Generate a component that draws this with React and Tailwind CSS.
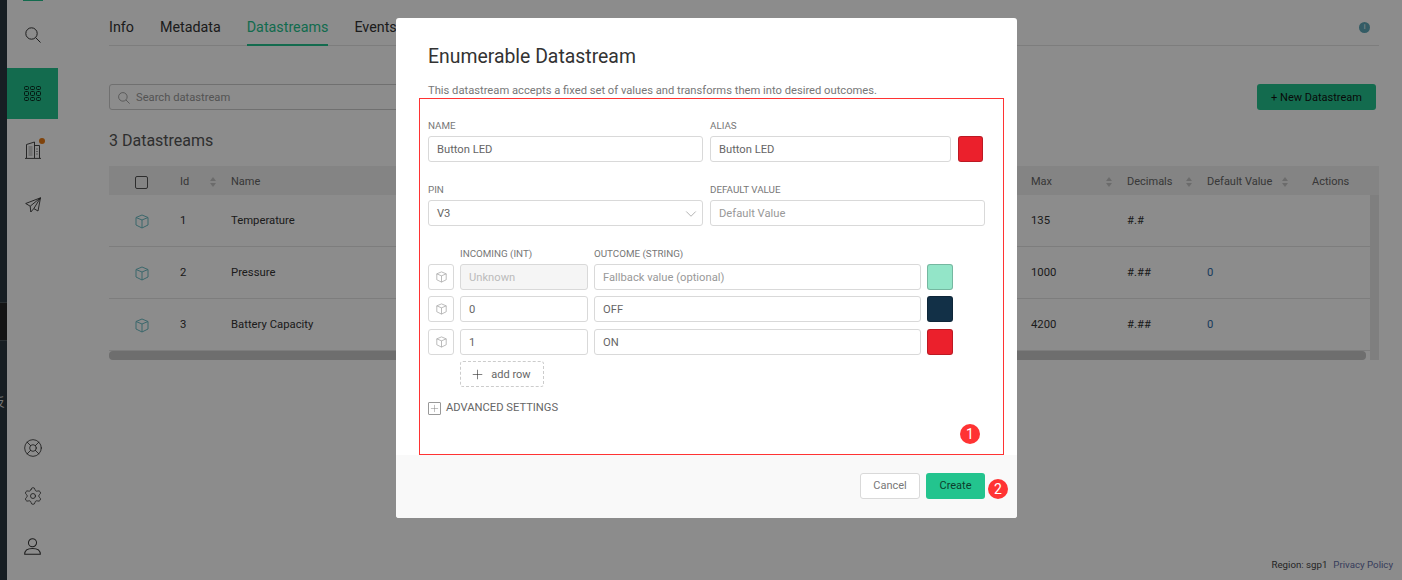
import { LifeBuoy, Settings, ChevronDown, Plus } from 'lucide-react';

function CubeIcon({ className }) {
  return (
    <svg viewBox="0 0 14 15" fill="none" stroke="currentColor" strokeWidth="1" className={className}>
      <path d="M7 1 L13 3.5 V11 L7 14 L1 11 V3.5 Z" strokeLinejoin="round" />
      <path d="M1 3.5 L7 6 L13 3.5 M7 6 V14" strokeLinejoin="round" />
    </svg>
  );
}

function SearchIcon({ size, color }) {
  return (
    <svg viewBox="0 0 16 16" width={size} height={size} fill="none" stroke={color} strokeWidth="1">
      <circle cx="6.5" cy="6.5" r="5.7" />
      <path d="M10.7 10.7 L15.5 15.5" />
    </svg>
  );
}

function GridIcon() {
  const cells = [0, 1, 2, 3, 4, 5, 6, 7, 8];
  return (
    <div className="grid grid-cols-3 gap-[1px]">
      {cells.map((c) => (
        <div key={c} className="w-[5px] h-[4.5px] rounded-[1.5px] border border-[#062a1e]" />
      ))}
    </div>
  );
}

function BuildingIcon() {
  return (
    <svg viewBox="0 0 16 18" width="16" height="18" fill="none" stroke="#333" strokeWidth="0.9">
      <path d="M1.5 17 V3.5 L9.5 1 V17" />
      <path d="M9.5 4.5 H14.5 V17" />
      <path d="M0 17.4 H16" />
      <path d="M3.5 6 H7.5 M3.5 8 H7.5 M3.5 10 H7.5 M3.5 12 H7.5 M3.5 14 H7.5 M11 8 H13 M11 10.5 H13 M11 13 H13" strokeWidth="0.7" stroke="#777" />
    </svg>
  );
}

function PlaneIcon() {
  return (
    <svg viewBox="0 0 16 16" width="16" height="16" fill="none" stroke="#333" strokeWidth="0.9" strokeLinejoin="round">
      <path d="M15.5 0.8 L0.7 6.5 L5.2 9.2 L15.5 0.8 L8.8 11.6 L13 14 Z" />
      <path d="M5.2 9.2 L5.8 15 L8.8 11.6" />
    </svg>
  );
}

function UserIcon() {
  return (
    <svg viewBox="0 0 16 16" width="17" height="17" fill="none" stroke="#333" strokeWidth="0.95">
      <circle cx="8" cy="4.5" r="3.8" />
      <path d="M0.6 15.4 C0.6 11.6 3.8 9.8 8 9.8 C12.2 9.8 15.4 11.6 15.4 15.4 Z" strokeLinejoin="round" />
    </svg>
  );
}

function SortIcon() {
  return (
    <div className="flex flex-col gap-[2px] items-center w-[6px]">
      <div className="w-0 h-0 border-x-[3px] border-x-transparent border-b-[4px] border-b-[#c4c4c4]" />
      <div className="w-0 h-0 border-x-[3px] border-x-transparent border-t-[4px] border-t-[#c4c4c4]" />
    </div>
  );
}

function SideItem({ children, className = '' }) {
  return <div className={`relative flex items-center justify-center text-[#333] ${className}`}>{children}</div>;
}

function Sidebar() {
  return (
    <div className="w-[51px] h-full shrink-0 bg-white flex flex-col relative shadow-[3px_0_5px_rgba(0,0,0,0.04)]">
      <div className="h-[1px] flex justify-center"><div className="w-[20px] h-[1px] bg-[#23c48e]" /></div>
      <SideItem className="h-[67px]"><SearchIcon size={16} color="#333" /></SideItem>
      <div className="h-[51px] bg-[#23c48e] flex items-center justify-center"><GridIcon /></div>
      <SideItem className="h-[60px] pt-[2px]">
        <BuildingIcon />
        <div className="absolute left-[32px] top-[19px] w-[6px] h-[6px] rounded-full bg-[#ea7b14]" />
      </SideItem>
      <SideItem className="h-[50px] pt-[2px]"><PlaneIcon /></SideItem>
      <div className="flex-1" />
      <SideItem className="h-[48px]"><LifeBuoy size={20} strokeWidth={1} /></SideItem>
      <SideItem className="h-[48px]"><Settings size={20} strokeWidth={1} /></SideItem>
      <SideItem className="h-[52px] mb-[8px]"><UserIcon /></SideItem>
    </div>
  );
}

const rows = [
  { id: 1, name: 'Temperature', max: '135', decimals: '#.#', def: '' },
  { id: 2, name: 'Pressure', max: '1000', decimals: '#.##', def: '0' },
  { id: 3, name: 'Battery Capacity', max: '4200', decimals: '#.##', def: '0' },
];

function Page() {
  return (
    <div className="flex-1 min-w-0 h-full bg-white flex flex-col relative pl-[51px]">
      <div className="w-[1270px] h-[46px] flex gap-[26px] border-b border-[#e4e4e4] text-[14.3px] text-[#333]">
        <div className="pt-[17px]">Info</div>
        <div className="pt-[17px]">Metadata</div>
        <div className="pt-[17px] text-[#23c48e] border-b-2 border-[#23c48e] h-[46px]">Datastreams</div>
        <div className="pt-[17px]">Events</div>
        <div className="ml-auto mr-[9px] mt-[22px] w-[11px] h-[11px] rounded-full bg-[#5fa8b8] text-white text-[7px] flex items-center justify-center">i</div>
      </div>

      <div className="w-[1267px] mt-[38px] flex justify-between">
        <div className="w-[400px] h-[26px] border border-[#ccc] rounded-[3px] flex items-center pl-[8px] gap-[6px] pt-[2px] text-[11.2px] text-[#999]">
          <SearchIcon size={12} color="#888" />
          Search datastream
        </div>
        <div className="w-[119px] h-[26px] pt-[2px] bg-[#23c48e] rounded-[3px] flex items-center justify-center text-[11px] text-[#111]">+ New Datastream</div>
      </div>

      <div className="mt-[19px] text-[16px] leading-[24px] text-[#555]">3 Datastreams</div>

      <div className="w-[1270px] mt-[13px] relative">
        <div className="h-[29px] pt-[3px] bg-[#f0f0f0] flex items-center text-[11px] text-[#666]">
          <div className="w-[71px] pl-[26px]"><div className="w-[13px] h-[13px] border border-[#555] rounded-[2px]" /></div>
          <div className="w-[51px] flex items-center">
            <span className="w-[30px]">Id</span>
            <SortIcon />
          </div>
          <div className="w-[800px]">Name</div>
          <div className="w-[96px] flex items-center"><span className="w-[75px]">Max</span><SortIcon /></div>
          <div className="w-[80px] flex items-center"><span className="w-[59px]">Decimals</span><SortIcon /></div>
          <div className="w-[105px] flex items-center"><span className="w-[75px]">Default Value</span><SortIcon /></div>
          <div>Actions</div>
        </div>
        <div className="flex">
          <div className="w-[1261px]">
            {rows.map((r) => (
              <div key={r.id} className="h-[52px] pt-[1px] flex items-center border-b border-[#e4e4e4] last:border-b-0 text-[11.3px] text-[#333]">
                <div className="w-[71px] pl-[26px] text-[#6bbcc4]"><CubeIcon className="w-[14px] h-[15px]" /></div>
                <div className="w-[51px]">{r.id}</div>
                <div className="w-[800px]">{r.name}</div>
                <div className="w-[96px]">{r.max}</div>
                <div className="w-[80px]">{r.decimals}</div>
                <div className="w-[105px] text-[#2d6ca8]">{r.def}</div>
              </div>
            ))}
            <div className="h-[9px] w-[1257px] bg-[#c8c8c8] rounded-[4px]" />
          </div>
          <div className="w-[9px] bg-[#e8e8e8]" />
        </div>
      </div>

      <div className="absolute right-[9px] bottom-[7px] flex gap-[6px] text-[9.7px] text-[#444]">
        <span>Region: sgp1</span>
        <span className="text-[#6570a8]">Privacy Policy</span>
      </div>
    </div>
  );
}

function Field({ label, className = '', children }) {
  return (
    <div className={className}>
      <div className="h-[13px] leading-[12px] mb-[3px] text-[9.8px] text-[#777]">{label}</div>
      {children}
    </div>
  );
}

function Input({ value, placeholder, className = '', disabled }) {
  return (
    <div className={`h-[26px] pt-[2px] border border-[#d9d9d9] rounded-[3px] flex items-center pl-[8px] text-[11.2px] ${disabled ? 'bg-[#f5f5f5]' : 'bg-white'} ${value ? 'text-[#666]' : disabled ? 'text-[#bbb]' : 'text-[#999]'} ${className}`}>
      {value || placeholder}
    </div>
  );
}

function Swatch({ color }) {
  return <div className={`w-[26px] h-[26px] rounded-[3px] border border-black/20 ${color}`} />;
}

function CubeButton() {
  return (
    <div className="w-[26px] h-[26px] border border-[#d9d9d9] rounded-[3px] flex items-center justify-center text-[#aaa]">
      <CubeIcon className="w-[11px] h-[12px]" />
    </div>
  );
}

function Modal() {
  return (
    <div className="absolute left-[396px] top-[18px] w-[621px] h-[500px] bg-white rounded-[3px] flex flex-col">
      <div className="h-[437px] px-[32px] relative">
        <div className="pt-[26px] text-[19.4px] leading-[25px] text-[#333]">Enumerable Datastream</div>
        <div className="mt-[14px] text-[11.2px] leading-[15px] text-[#777]">This datastream accepts a fixed set of values and transforms them into desired outcomes.</div>

        <div className="mt-[22px] flex gap-[7px]">
          <Field label="NAME" className="w-[275px]"><Input value="Button LED" /></Field>
          <Field label="ALIAS" className="w-[241px]"><Input value="Button LED" /></Field>
          <div className="pt-[16px]"><div className="w-[25px] h-[26px] rounded-[3px] border border-black/20 bg-[#eb202c]" /></div>
        </div>

        <div className="mt-[22px] flex gap-[7px]">
          <Field label="PIN" className="w-[275px]">
            <div className="h-[26px] pt-[1px] border border-[#d9d9d9] rounded-[3px] flex items-center justify-between pl-[8px] pr-[2px] text-[11.2px] text-[#666]">
              <span className="pt-[1px]">V3</span>
              <ChevronDown size={18} strokeWidth={1} className="text-[#999]" />
            </div>
          </Field>
          <Field label="DEFAULT VALUE" className="w-[275px]"><Input placeholder="Default Value" /></Field>
        </div>

        <div className="mt-[22px] flex gap-[6px] pl-[32px] h-[12px] leading-[12px] text-[9.8px] text-[#777]">
          <div className="w-[128px]">INCOMING (INT)</div>
          <div>OUTCOME (STRING)</div>
        </div>

        <div className="mt-[4px] flex flex-col">
          <div className="flex gap-[6px]">
            <CubeButton />
            <Input className="w-[128px]" placeholder="Unknown" disabled />
            <Input className="w-[327px]" placeholder="Fallback value (optional)" />
            <Swatch color="bg-[#93e5c8]" />
          </div>
          <div className="flex gap-[6px] mt-[6px]">
            <CubeButton />
            <Input className="w-[128px]" value="0" />
            <Input className="w-[327px]" value="OFF" />
            <Swatch color="bg-[#123047]" />
          </div>
          <div className="flex gap-[6px] mt-[7px]">
            <CubeButton />
            <Input className="w-[128px]" value="1" />
            <Input className="w-[327px]" value="ON" />
            <Swatch color="bg-[#eb202c]" />
          </div>
        </div>

        <div className="mt-[6px] ml-[32px] w-[84px] h-[26px] pr-[3px] border border-dashed border-[#ccc] rounded-[3px] flex items-center justify-center gap-[6px] text-[11px] text-[#666]">
          <Plus size={15} strokeWidth={1} className="text-[#333]" />
          <span className="pt-[2px]">add row</span>
        </div>

        <div className="mt-[13px] flex items-center gap-[5px] text-[11.2px] text-[#666]">
          <div className="w-[13px] h-[13px] border border-[#999] rounded-[1px] flex items-center justify-center text-[#777]"><Plus size={11} strokeWidth={1} /></div>
          ADVANCED SETTINGS
        </div>
      </div>

      <div className="flex-1 bg-[#f9f9f9] rounded-b-[3px] flex justify-end items-start gap-[6px] pt-[18px] pr-[32px]">
        <div className="w-[60px] h-[26px] bg-white border border-[#d9d9d9] rounded-[3px] flex items-center justify-center text-[11px] text-[#777]">Cancel</div>
        <div className="w-[59px] h-[26px] bg-[#23c48e] rounded-[3px] flex items-center justify-center text-[11px] text-[#0d3d2c]">Create</div>
      </div>

      {/* annotations drawn over the dialog */}
      <div className="absolute left-[23px] top-[80px] w-[585px] h-[357px] border border-[#ff3333]" />
      <div className="absolute left-[564px] top-[406px] w-[20px] h-[20px] rounded-full bg-[#ff3333] text-white text-[14px] flex items-center justify-center">1</div>
      <div className="absolute left-[592px] top-[461px] w-[20px] h-[20px] rounded-full bg-[#ff3333] text-white text-[14px] flex items-center justify-center">2</div>
    </div>
  );
}

export default function App() {
  return (
    <div className="relative w-[1402px] h-[580px] overflow-hidden flex font-['Roboto',sans-serif]">
      <div className="w-[7px] h-full shrink-0 bg-[#2b3840] flex flex-col overflow-hidden">
        <div className="h-[302px] shrink-0" />
        <div className="h-[39px] shrink-0 bg-[#262626] border-y border-[#4a545a]" />
        <div className="mt-[54px] -ml-[7px] text-[12px] leading-[14px] text-[#ddd] font-['Noto_Sans_CJK_SC',sans-serif]">反</div>
      </div>
      <Sidebar />
      <Page />
      <div className="absolute inset-0 bg-black/45" />
      <Modal />
    </div>
  );
}
